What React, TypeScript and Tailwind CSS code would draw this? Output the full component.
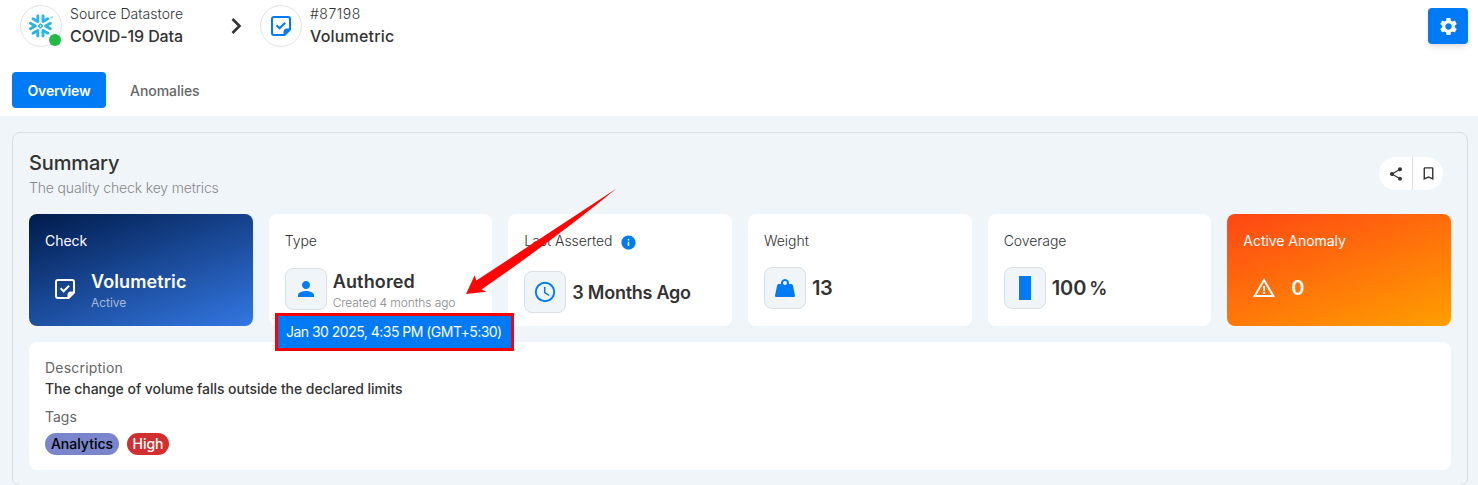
import type { ReactNode } from 'react';
import { MdSettings, MdShare, MdBookmarkBorder, MdPerson, MdInfo, MdWarningAmber } from 'react-icons/md';
import { SiSnowflake } from 'react-icons/si';

function NoteCheck({ size }: { size: number }) {
  return (
    <svg width={size} height={size} viewBox="0 0 24 24" fill="currentColor">
      <path d="M5 2h14a3 3 0 0 1 3 3v11l-6 6H5a3 3 0 0 1-3-3V5a3 3 0 0 1 3-3Zm0 2a1 1 0 0 0-1 1v14a1 1 0 0 0 1 1h9.500v-2a3.500 3.500 0 0 1 3.500-3.500h2V5a1 1 0 0 0-1-1H5Z" fillRule="evenodd" />
      <path d="m7.600 11.300 3 3 5.500-5.500" fill="none" stroke="currentColor" strokeWidth="2" />
    </svg>
  );
}

function Clock() {
  return (
    <svg width="24" height="24" viewBox="0 0 24 24" fill="none" stroke="currentColor" strokeWidth="1.9">
      <circle cx="12" cy="12" r="9.2" />
      <path d="M11.700 7v5.500l4.500 3" strokeWidth="1.5" />
    </svg>
  );
}

function Weight() {
  return (
    <svg width="24" height="24" viewBox="0 0 24 24" fill="currentColor">
      <path fillRule="evenodd" d="M12 3a4 4 0 0 1 3.900 5H18c.9 0 1.600.6 1.900 1.400L22 19.500c.2.9-.4 1.500-1.300 1.500H3.300c-.9 0-1.500-.6-1.300-1.500L4.100 9.400C4.400 8.600 5.100 8 6 8h2.100A4 4 0 0 1 12 3Zm0 2a2 2 0 1 0 0 4 2 2 0 0 0 0-4Z" />
    </svg>
  );
}

function Tile({ children }: { children: ReactNode }) {
  return <div className="flex size-[42px] shrink-0 items-center justify-center rounded-lg border border-[#dadfe3] bg-[#f0f5fa] text-[#007bf5]">{children}</div>;
}

function Card({ title, tone = 'bg-white', children }: { title: ReactNode; tone?: string; children: ReactNode }) {
  return (
    <div className={`h-28 min-w-0 flex-1 rounded-lg px-4 pt-4 ${tone}`}>
      <div className="flex h-5 items-center text-[14px] tracking-[-0.05px] whitespace-nowrap">{title}</div>
      {children}
    </div>
  );
}

export default function App() {
  return (
    <div className="relative h-[485px] w-full overflow-hidden bg-[#f0f5fa] font-['Inter','Noto_Sans',sans-serif] text-[#333]">
      <header className="h-[116px] bg-white">
        <div className="flex h-[72px] pl-5">
          <div className="relative mt-[5px] flex size-[42px] items-center justify-center rounded-full border border-[#e3e3e3]">
            <SiSnowflake size={24} className="text-[#29b5e8]" />
            <span className="absolute right-0 bottom-0 size-3 rounded-full bg-[#21ba45]" />
          </div>
          <div className="ml-2 w-[154px] pt-1 whitespace-nowrap">
            <div className="text-[14px] leading-5 font-light tracking-[0.05px]">Source Datastore</div>
            <div className="text-[16px] leading-6 font-medium tracking-[-0.1px]">COVID-19 Data</div>
          </div>
          <svg className="mt-[14px]" width="24" height="24" viewBox="0 0 24 24" fill="none" stroke="currentColor" strokeWidth="2.6">
            <path d="m8.500 5 7 7-7 7" />
          </svg>
          <div className="mt-[5px] ml-3 flex size-[42px] items-center justify-center rounded-full border border-[#e3e3e3] text-[#007bf5]">
            <NoteCheck size={24} />
          </div>
          <div className="ml-2 pt-1 whitespace-nowrap">
            <div className="text-[14px] leading-5 font-light tracking-[0.5px]">#87198</div>
            <div className="text-[16px] leading-6 font-medium tracking-[0.2px]">Volumetric</div>
          </div>
          <button className="mt-2 mr-[10px] ml-auto flex h-9 w-10 items-center justify-center rounded bg-[#007bf5] text-white shadow-md">
            <MdSettings size={21} />
          </button>
        </div>
        <nav className="flex h-9 pl-3 text-[14px]">
          <div className="flex w-[94px] items-center justify-center rounded bg-[#007bf5] font-semibold tracking-[-0.2px] text-white">Overview</div>
          <div className="flex items-center pl-6 font-medium tracking-[-0.05px] text-[#666]">Anomalies</div>
        </nav>
      </header>

      <main className="mx-3 mt-4 mr-[10px] h-[354px] rounded-lg border border-[#d8dde2] px-4">
        <div className="flex h-[81px] justify-between">
          <div className="pt-4 whitespace-nowrap">
            <h1 className="text-[20px] leading-7 font-medium tracking-[-0.15px]">Summary</h1>
            <p className="text-[14px] leading-[22px] font-light tracking-[-0.16px] text-[#888]">The quality check key metrics</p>
          </div>
          <div className="mt-6 mr-2 flex h-[33px] w-16 overflow-hidden rounded-full bg-white">
            <div className="flex w-[34px] items-center justify-center border-r border-[#e0e0e0]"><MdShare size={16} /></div>
            <div className="flex flex-1 items-center justify-center"><MdBookmarkBorder size={17} /></div>
          </div>
        </div>

        <section className="flex gap-4">
          <Card title="Check" tone="bg-linear-[160deg,#001b4b,#3377e2] text-white">
            <div className="mt-5 flex">
              <div className="mt-[7px] ml-2 w-[38px]"><NoteCheck size={24} /></div>
              <div className="whitespace-nowrap">
                <div className="text-[18px] leading-6 font-semibold tracking-[0.1px]">Volumetric</div>
                <div className="text-[12px] leading-[18px] tracking-[-0.05px] text-white/60">Active</div>
              </div>
            </div>
          </Card>
          <Card title={<span className="font-light">Type</span>}>
            <div className="mt-[18px] flex">
              <Tile><MdPerson size={24} /></Tile>
              <div className="ml-1.5 pt-0.5 whitespace-nowrap">
                <div className="text-[18px] leading-6 font-semibold tracking-[0.15px]">Authored</div>
                <div className="text-[12px] leading-[18px] font-light tracking-[-0.08px] text-[#888]">Created 4 months ago</div>
              </div>
            </div>
          </Card>
          <Card title={<><span className="font-light">Last Asserted</span><MdInfo size={17} className="mt-[5px] ml-2 text-[#007bf5]" /></>}>
            <div className="mt-[21px] flex items-center">
              <Tile><Clock /></Tile>
              <span className="ml-1.5 text-[18px] font-semibold tracking-[-0.25px] whitespace-nowrap">3 Months Ago</span>
            </div>
          </Card>
          <Card title={<span className="font-light">Weight</span>}>
            <div className="mt-[17px] flex items-center">
              <Tile><Weight /></Tile>
              <span className="ml-1.5 text-[20px] font-semibold tracking-[-0.4px]">13</span>
            </div>
          </Card>
          <Card title={<span className="font-light">Coverage</span>}>
            <div className="mt-[17px] flex items-center">
              <Tile><span className="h-6 w-3 bg-[#007bf5]" /></Tile>
              <span className="ml-1.5 text-[20px] font-semibold tracking-[-0.1px]">100</span>
              <span className="ml-[3px] text-[18px] font-semibold">%</span>
            </div>
          </Card>
          <Card title="Active Anomaly" tone="bg-linear-[160deg,#ff4614,#ff9f00] text-white">
            <div className="mt-[17px] flex h-[42px] items-center">
              <MdWarningAmber size={24} className="ml-[9px]" />
              <span className="ml-[15px] text-[20px] font-semibold">0</span>
            </div>
          </Card>
        </section>

        <section className="mt-4 h-32 rounded-lg bg-white px-4 pt-4 text-[14px]">
          <div className="leading-5 tracking-[0.2px] text-[#666]">Description</div>
          <div className="leading-[22px] font-medium tracking-[-0.05px]">The change of volume falls outside the declared limits</div>
          <div className="mt-[7px] leading-5 text-[#666]">Tags</div>
          <div className="mt-1.5 flex gap-2 leading-[22px] font-medium">
            <span className="flex h-[22px] w-[74px] justify-center rounded-full bg-[#7986cb] text-black">Analytics</span>
            <span className="flex h-[22px] w-[42px] justify-center rounded-full bg-[#d32f2f] text-white">High</span>
          </div>
        </section>
      </main>

      <div className="absolute top-[313px] left-[275px] flex h-[38px] w-[239px] items-center border-[3px] border-[#fb0007] bg-[#007bf5] pb-0.5 pl-2 text-[14px] tracking-[-0.52px] whitespace-nowrap text-white">Jan 30 2025, 4:35 PM (GMT+5:30)</div>
      <svg className="absolute top-[180px] left-[460px]" width="165" height="120" viewBox="460 180 165 120" fill="#ff0505">
        <path d="M616.500 188.500Q556 238 481.500 289.500l5 2.200L466 294l8.700-18.700 1.600 5.200Z" />
      </svg>
    </div>
  );
}
